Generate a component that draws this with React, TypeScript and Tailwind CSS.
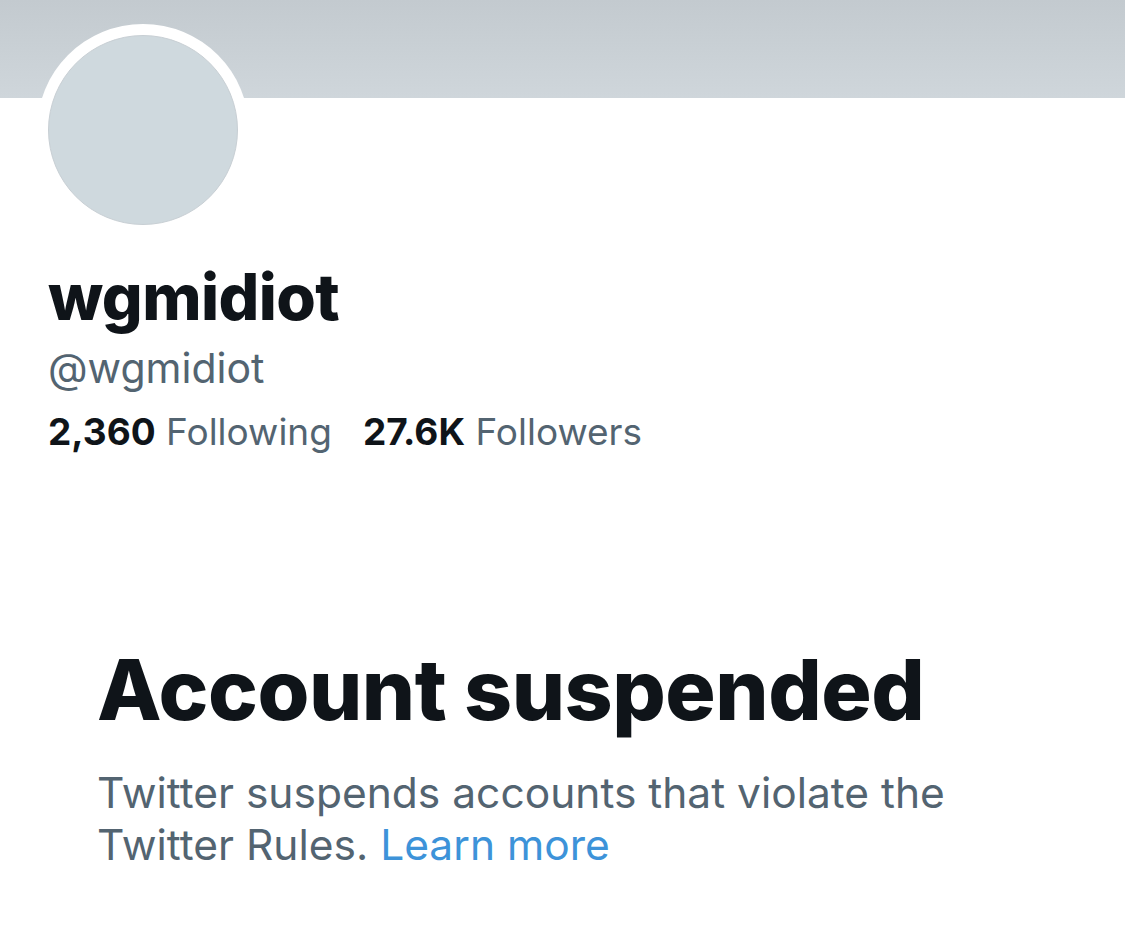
export default function App() {
  return (
    <main
      className="min-h-screen bg-white text-[#0f1419]"
      style={{ fontFamily: "Inter, 'Noto Sans', sans-serif" }}
    >
      <div className="h-[98px] bg-gradient-to-b from-[#c3cacf] to-[#cfd6db]" />
      <div className="px-12">
        <div className="relative -mt-[74px] -ml-[11px] h-[212px] w-[212px] rounded-full bg-white p-[11px]">
          <div className="h-full w-full rounded-full border border-[#c8cfd4] bg-[#cfd9de]" />
        </div>
        <h1 className="mt-[25px] text-[64px] font-extrabold leading-[72px] tracking-[-0.6px]">
          wgmidiot
        </h1>
        <p className="mt-[9px] text-[41px] leading-[52px] text-[#536471]">@wgmidiot</p>
        <div className="mt-[14px] flex gap-[31px] text-[37px] leading-[48px]">
          <span>
            <span className="font-bold">2,360</span>{" "}
            <span className="text-[#536471]">Following</span>
          </span>
          <span>
            <span className="font-bold">27.6K</span>{" "}
            <span className="text-[#536471]">Followers</span>
          </span>
        </div>
      </div>
      <div className="mt-[186px] px-[97px]">
        <h2 className="text-[84px] font-extrabold leading-[96px] tracking-[-0.5px]">
          Account suspended
        </h2>
        <p className="mt-[29px] max-w-[900px] text-[42.5px] leading-[52px] text-[#536471]">
          Twitter suspends accounts that violate the Twitter Rules.{" "}
          <span className="text-[#3d93d9]">Learn more</span>
        </p>
      </div>
    </main>
  );
}
